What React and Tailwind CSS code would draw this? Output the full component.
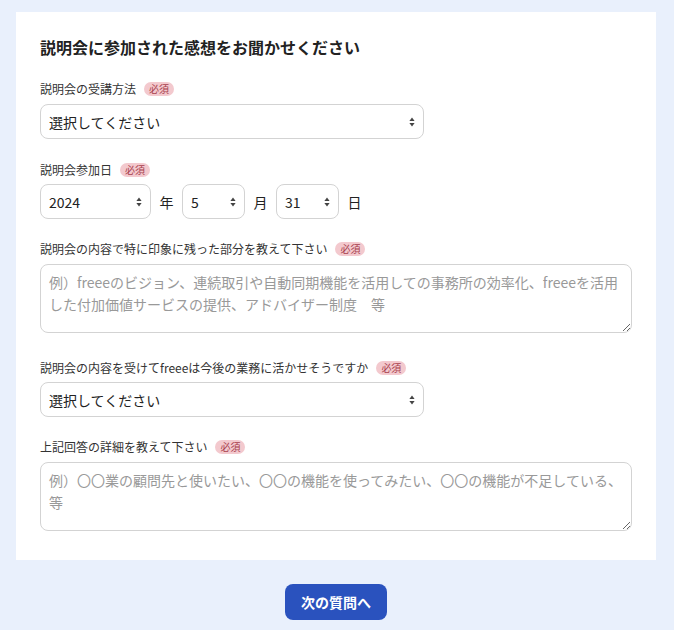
import { useState } from 'react';

const font = { fontFamily: '"Noto Sans CJK JP", "Noto Sans", sans-serif' };

function Required() {
  return (
    <span className="ml-2 inline-flex items-center rounded-full bg-[#f3c9ce] px-[5px] text-[10px] leading-[14px] text-[#a8404d]">
      必須
    </span>
  );
}

function Label({ children, className = 'mb-[7px]' }) {
  return (
    <div className={'flex items-center text-xs leading-4 text-[#333] ' + className}>
      {children}
      <Required />
    </div>
  );
}

function Arrows() {
  return (
    <svg
      className="pointer-events-none absolute right-[9px] top-1/2 -translate-y-1/2"
      width="6"
      height="10"
      viewBox="0 0 6 10"
    >
      <path d="M3 0.5 L5.6 4 H0.4 Z" fill="#444" />
      <path d="M3 9.5 L5.6 6 H0.4 Z" fill="#444" />
    </svg>
  );
}

function Select({ className, value, options, onChange }) {
  return (
    <div className={'relative ' + className}>
      <select
        value={value}
        onChange={(e) => onChange(e.target.value)}
        className="block h-[35px] w-full appearance-none rounded-lg border border-[#d3d3d3] bg-white pl-2 pr-6 text-sm text-[#222] outline-none"
      >
        {options.map((o) => (
          <option key={o}>{o}</option>
        ))}
      </select>
      <Arrows />
    </div>
  );
}

function TextArea({ placeholder }) {
  return (
    <textarea
      placeholder={placeholder}
      className="block h-[69px] w-full rounded-lg border border-[#d3d3d3] bg-white px-2 py-[6px] text-sm leading-[22px] text-[#222] outline-none placeholder:text-[#999]"
    />
  );
}

export default function App() {
  const [method, setMethod] = useState('選択してください');
  const [year, setYear] = useState('2024');
  const [month, setMonth] = useState('5');
  const [day, setDay] = useState('31');
  const [useful, setUseful] = useState('選択してください');

  return (
    <div className="min-h-screen bg-[#e9f0fc] pl-4 pr-[18px] pt-3 pb-6" style={font}>
      <div className="bg-white px-6 pt-[23px] pb-[29px]">
        <h1 className="text-base leading-6 font-bold text-[#222]">説明会に参加された感想をお聞かせください</h1>

        <div className="mt-[22px]">
          <Label>説明会の受講方法</Label>
          <Select
            className="w-[384px]"
            value={method}
            onChange={setMethod}
            options={['選択してください', 'オンライン', '会場']}
          />
        </div>

        <div className="mt-[23px]">
          <Label className="mb-[6px]">説明会参加日</Label>
          <div className="flex items-center gap-2 text-sm text-[#222]">
            <Select className="w-[111px]" value={year} onChange={setYear} options={['2023', '2024', '2025']} />
            <span className="w-[15px] text-center">年</span>
            <Select
              className="w-[63px]"
              value={month}
              onChange={setMonth}
              options={Array.from({ length: 12 }, (_, i) => String(i + 1))}
            />
            <span className="w-[15px] text-center">月</span>
            <Select
              className="w-[63px]"
              value={day}
              onChange={setDay}
              options={Array.from({ length: 31 }, (_, i) => String(i + 1))}
            />
            <span className="w-[15px] text-center">日</span>
          </div>
        </div>

        <div className="mt-[22px]">
          <Label>説明会の内容で特に印象に残った部分を教えて下さい</Label>
          <TextArea placeholder="例）freeeのビジョン、連続取引や自動同期機能を活用しての事務所の効率化、freeeを活用した付加価値サービスの提供、アドバイザー制度　等" />
        </div>

        <div className="mt-[27px]">
          <Label className="mb-[6px]">説明会の内容を受けてfreeeは今後の業務に活かせそうですか</Label>
          <Select
            className="w-[384px]"
            value={useful}
            onChange={setUseful}
            options={['選択してください', '活かせそう', 'どちらとも言えない', '活かせなそう']}
          />
        </div>

        <div className="mt-[22px]">
          <Label>上記回答の詳細を教えて下さい</Label>
          <TextArea placeholder="例）〇〇業の顧問先と使いたい、〇〇の機能を使ってみたい、〇〇の機能が不足している、等" />
        </div>
      </div>

      <div className="mt-6 flex justify-center">
        <button className="h-9 rounded-lg bg-[#2a52be] px-4 text-sm font-bold text-white">次の質問へ</button>
      </div>
    </div>
  );
}
